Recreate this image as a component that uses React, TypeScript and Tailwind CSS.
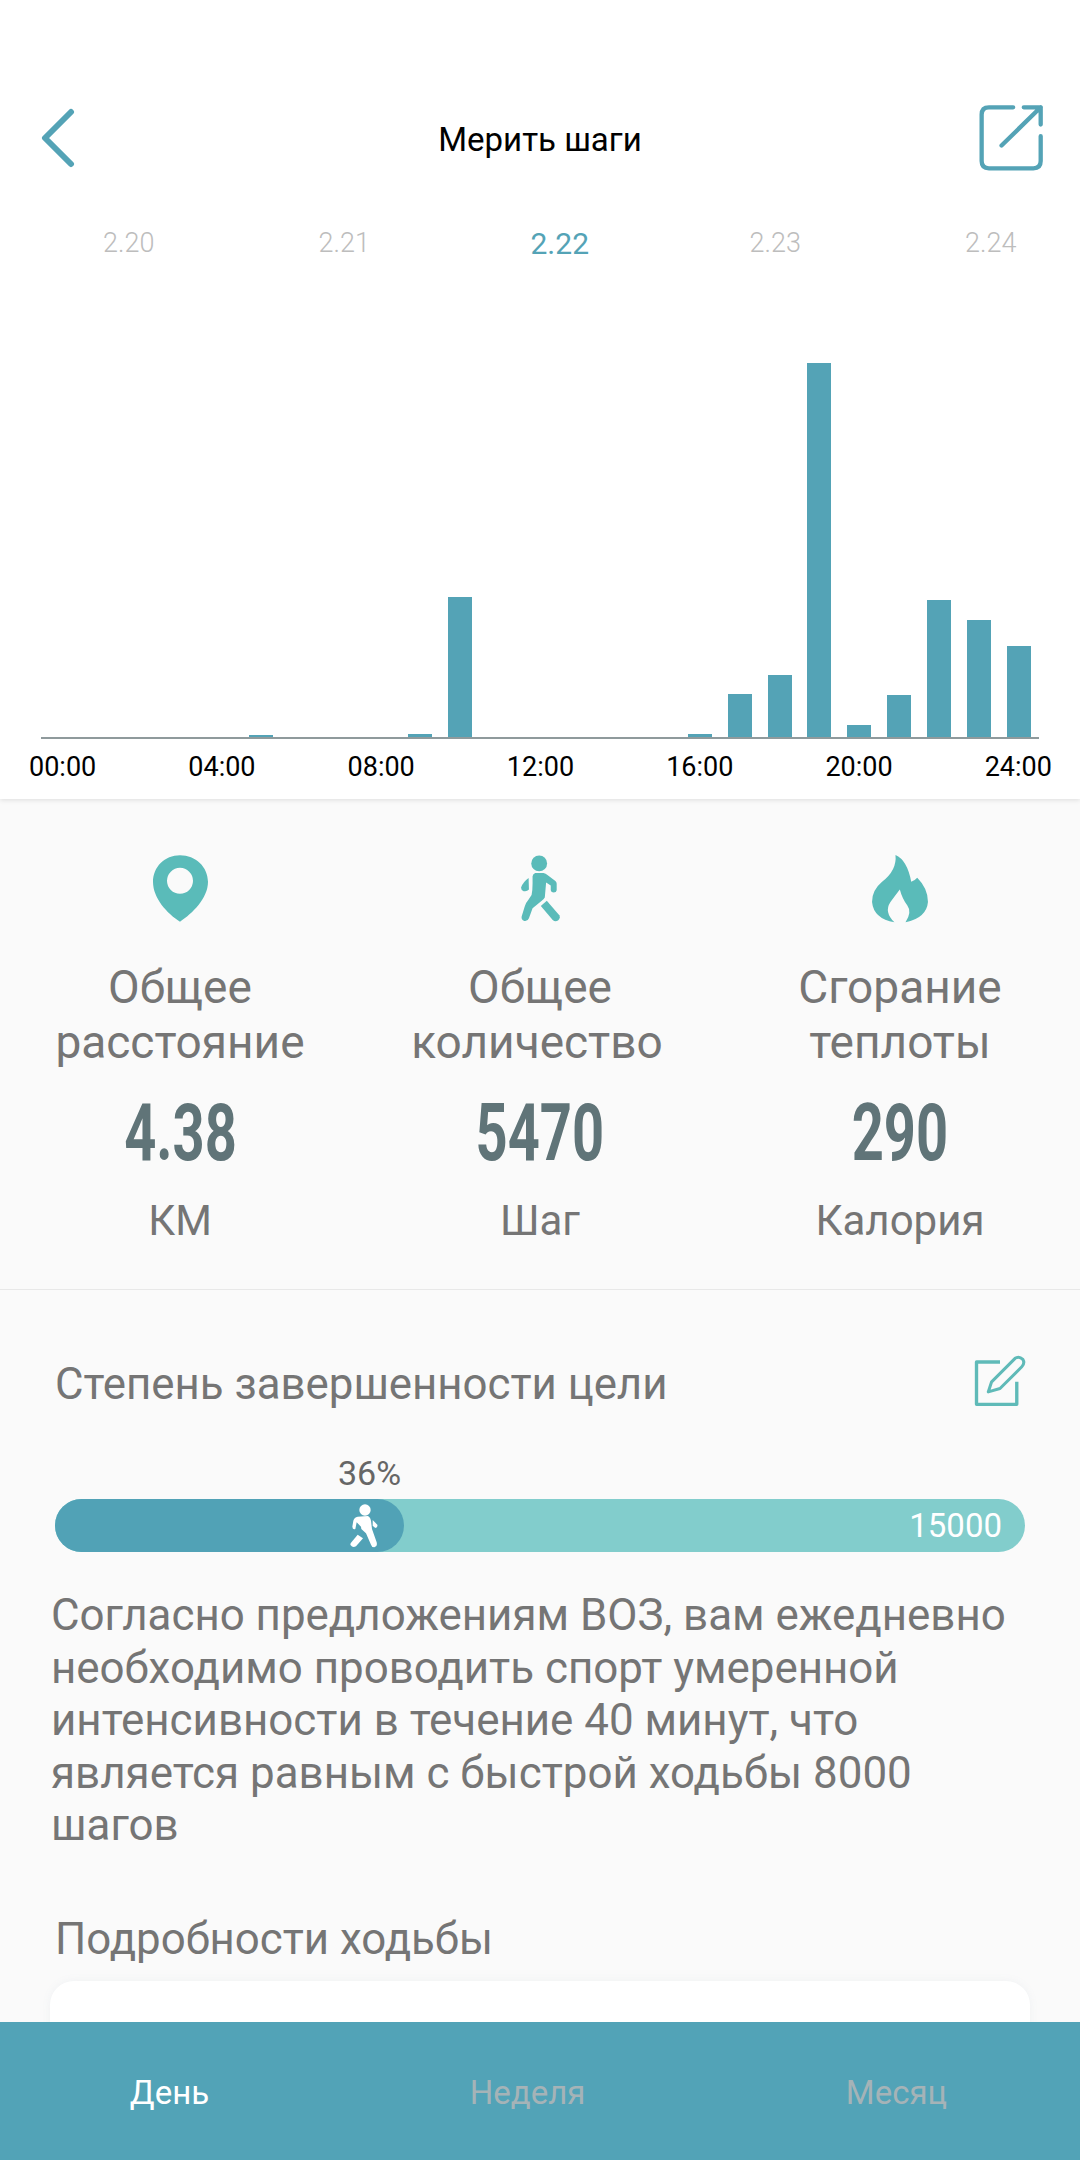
const dates = ["2.20", "2.21", "2.22", "2.23", "2.24"];
const hours = ["00:00", "04:00", "08:00", "12:00", "16:00", "20:00", "24:00"];

// bar height in px for each hour 0..24
const bars = [0, 0, 0, 0, 0, 2, 0, 0, 0, 3, 140, 0, 0, 0, 0, 0, 3, 43, 62, 374, 12, 42, 137, 117, 91];

const Walker = () => (
  <svg viewBox="90 45 118 200" className="w-[39px] h-[67px]" fill="#5abbb9">
    <circle cx="145" cy="69" r="24" />
    <path d="M133 98H158Q165 99 170 104L194 122Q198 125 198 131V150Q197 157 189 157Q181 157 180 150V136L166 127L162 172Q160 176 150 184L125 205L114 235Q110 245 100 243Q90 240 92 230L101 200Q104 188 113 178L122 165Q125 150 125 130V108Q126 100 133 98Z" />
    <path d="M113 113L114 148Q108 155 98 153Q90 150 90 142Q96 125 113 113Z" />
    <path d="M168 182L206 226Q210 236 202 242Q193 247 186 240L150 198Z" />
  </svg>
);

const Pin = () => (
  <svg viewBox="97 45 165 200" className="w-[55px] h-[67px]" fill="#5abbb9">
    <path
      fillRule="evenodd"
      d="M178 45C225 45 262 80 262 125C262 175 215 220 178 245C140 220 97 175 97 125C97 80 132 45 178 45ZM178 83A39 39 0 1 0 178 161A39 39 0 1 0 178 83Z"
    />
  </svg>
);

const Flame = () => (
  <svg viewBox="95 45 167 203" className="w-[56px] h-[68px]" fill="#5abbb9">
    <path d="M165 45Q200 60 212 125Q222 122 230 113Q262 145 262 185Q258 232 195 246Q215 215 200 195Q185 175 178 148Q165 165 150 185Q130 215 162 246Q100 235 95 185Q95 150 125 125Q170 90 165 45Z" />
  </svg>
);

const stats = [
  { icon: <Pin />, label: ["Общее", "расстояние"], value: "4.38", unit: "КМ" },
  { icon: <Walker />, label: ["Общее", "количество"], value: "5470", unit: "Шаг" },
  { icon: <Flame />, label: ["Сгорание", "теплоты"], value: "290", unit: "Калория" },
];

export default function App() {
  return (
    <div className="w-[1080px] h-[2160px] flex flex-col overflow-hidden bg-[#fafafa] font-['Roboto',sans-serif]">
      <div className="flex-1 min-h-0 overflow-hidden">
        {/* Top — chart */}
        <section className="h-[799px] bg-white shadow-[0_1px_5px_rgba(0,0,0,0.12)] relative pt-[104px]">
          <div className="grid grid-cols-[1fr_auto_1fr] items-center h-[68px]">
            <div className="pl-[41px]">
              <svg viewBox="0 0 34 60" className="w-[34px] h-[60px]" fill="none" stroke="#54a3b6" strokeWidth="6" strokeLinecap="round" strokeLinejoin="round">
                <path d="M30 4L4 30L30 56" />
              </svg>
            </div>
            <h1 className="text-[33px] text-black mt-[4px]">Мерить шаги</h1>
            <div className="flex justify-end pr-[35px]">
              <svg viewBox="55 43 200 205" className="w-[67px] h-[68px]" fill="none" stroke="#54a3b6" strokeWidth="13" strokeLinecap="round" strokeLinejoin="round">
                <path d="M160 53H87Q65 53 65 75V215Q65 237 87 237H221Q243 237 243 215V140" />
                <path d="M125 168L243 53M192 53H243V105" />
              </svg>
            </div>
          </div>

          <div className="grid grid-cols-[repeat(5,215.5px)] pl-[21px] h-[40px] mt-[49px] items-center text-center text-[27px] font-light text-[#bdbdbd]">
            {dates.map((d) => (
              <span key={d} className={d === "2.22" ? "text-[30px] font-normal text-[#54a3b6]" : ""}>
                {d}
              </span>
            ))}
          </div>

          <div className="mt-[102px] mx-[41px] h-[374px] flex items-end border-b-2 border-[#8f9a9c] box-content">
            {bars.map((h, i) => (
              <div key={i} className="flex-1 flex justify-center">
                {h > 0 && <div className="w-[24px] bg-[#54a3b6]" style={{ height: h }} />}
              </div>
            ))}
          </div>

          <div className="flex justify-between pl-[29px] pr-[28px] mt-[8px] text-[27px] text-black">
            {hours.map((h) => (
              <span key={h}>{h}</span>
            ))}
          </div>
        </section>

        {/* Stats */}
        <section className="h-[491px] border-b border-[#e8e8e8] grid grid-cols-3 pt-[56px] text-center text-[46px] leading-[55px] text-[#757575]">
          {stats.map((s) => (
            <div key={s.value} className="flex flex-col items-center">
              <div className="h-[67px] flex items-center">{s.icon}</div>
              <div className="mt-[38px]">
                {s.label.map((l) => (
                  <div key={l} className={l === "количество" ? "-ml-[6px]" : ""}>
                    {l}
                  </div>
                ))}
              </div>
              <div className="mt-[32px] h-[62px] text-[80px] leading-[62px] font-bold text-[#607478] scale-x-[0.7]">{s.value}</div>
              <div className="mt-[29px] text-[42px]">{s.unit}</div>
            </div>
          ))}
        </section>

        {/* Goal */}
        <section className="pt-[68px]">
          <div className="flex items-center justify-between pl-[55px] pr-[53px] h-[54px]">
            <span className="text-[43.8px] text-[#757575]">Степень завершенности цели</span>
            <svg viewBox="70 45 160 155" className="w-[54px] h-[52px] -mt-[8px]" fill="none" stroke="#5fbab8" strokeWidth="10" strokeLinejoin="round">
              <path d="M150 66H80V192H200V125" />
              <path strokeWidth="9" d="M115 155L125 125L195 55Q207 47 218 58Q225 70 215 80L150 145Z" />
            </svg>
          </div>

          <div className="mt-[43px] pl-[338px] w-[450px] text-[34px] leading-[36px] text-[#666]">36%</div>

          <div className="relative mt-[8px] mx-[55px] h-[53px] rounded-full bg-[#82cdcc] flex items-center justify-end pr-[23px] text-[33px] text-white">
            <span>15000</span>
            <div className="absolute left-0 top-0 h-[53px] w-[349px] rounded-full bg-[#51a2b6] flex items-center justify-end pr-[26px]">
              <svg viewBox="92 190 84 132" className="w-[28px] h-[44px]" fill="#fff">
                <circle cx="137" cy="208" r="17" />
                <path d="M115 228L145 226Q152 228 155 240L158 265L172 305Q175 318 165 320Q157 320 155 312L140 278L126 265L125 258L112 245L108 265Q100 268 99 258L102 240Q105 230 115 228Z" />
                <path d="M160 238L174 252Q176 262 168 262L160 255Z" />
                <path d="M115 282L131 293L110 317Q100 322 94 314Q92 310 95 306Z" />
              </svg>
            </div>
          </div>

          <p className="mt-[37px] pl-[51px] pr-[40px] text-[43.9px] leading-[52.5px] text-[#757575]">
            Согласно предложениям ВОЗ, вам ежедневно необходимо проводить спорт умеренной интенсивности в течение 40 минут, что является равным с быстрой ходьбы 8000 шагов
          </p>

          <h2 className="mt-[60px] pl-[55px] text-[43.8px] leading-[54px] text-[#757575]">Подробности ходьбы</h2>
          <div className="mt-[15px] mx-[50px] h-[300px] rounded-[24px] bg-white shadow-[0_0_8px_rgba(120,140,170,0.08)]" />
        </section>
      </div>

      {/* Bottom tabs */}
      <nav className="h-[138px] shrink-0 bg-[#52a3b7] grid grid-cols-[339px_377px_1fr] items-center text-center text-[33px] text-[#a5b3b7] pt-[4px]">
        <span className="text-white">День</span>
        <span>Неделя</span>
        <span className="pr-[3px]">Месяц</span>
      </nav>
    </div>
  );
}
